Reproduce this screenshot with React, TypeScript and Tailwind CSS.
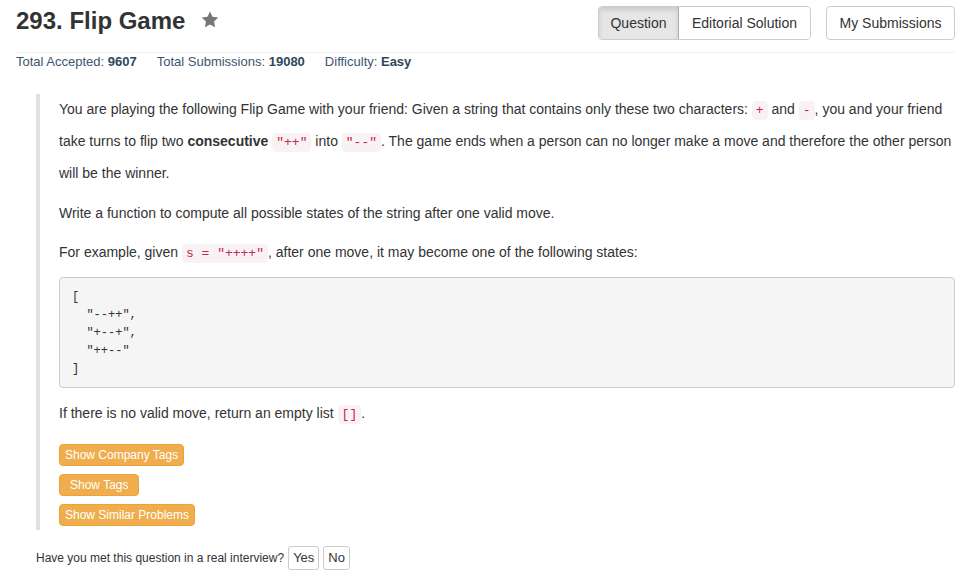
import React from 'react';

const code = "font-['Liberation_Mono',monospace] text-[13px] px-[4px] py-[2px] rounded-[4px] bg-[#f9f2f4] text-[#c7254e]";

function Star() {
  return (
    <svg width="18" height="17" viewBox="0 0 24 23" className="ml-[16px] mt-[5px]">
      <path d="M12 0.8l3.4 7.1 7.8 1-5.7 5.4 1.4 7.7L12 18.3l-6.9 3.7 1.4-7.7L0.8 8.9l7.8-1z" fill="#777" />
    </svg>
  );
}

export default function App() {
  const orange =
    'h-[22px] leading-[20px] text-[12px] text-white bg-[#f0ad4e] border border-[#eea236] rounded-[4px] self-start';

  return (
    <div className="w-[973px] h-[574px] bg-white text-[#333] font-['Liberation_Sans',Arial,sans-serif] overflow-hidden">
      {/* header */}
      <div className="ml-[16px] mr-[18px] pt-[6px] pb-[12px] border-b border-[#eee] flex justify-between items-start">
        <div className="flex items-start">
          <h1 className="text-[24px] leading-[30px] font-bold text-[#333]">293. Flip Game</h1>
          <Star />
        </div>
        <div className="flex gap-[15px] text-[14px]">
          <div className="flex rounded-[4px] border border-[#ccc] h-[34px] overflow-hidden">
            <div className="w-[80px] flex items-center justify-center bg-[#e6e6e6] shadow-[inset_0_3px_5px_rgba(0,0,0,0.125)] border-r border-[#adadad]">
              Question
            </div>
            <div className="w-[131px] flex items-center justify-center bg-white">Editorial Solution</div>
          </div>
          <div className="w-[129px] h-[34px] flex items-center justify-center rounded-[4px] border border-[#ccc] bg-white">
            My Submissions
          </div>
        </div>
      </div>

      {/* stats */}
      <div className="ml-[16px] flex gap-[20px] text-[13px] leading-[18px] text-[#3b5672]">
        <span>
          Total Accepted: <b className="text-[#2f4660]">9607</b>
        </span>
        <span>
          Total Submissions: <b className="text-[#2f4660]">19080</b>
        </span>
        <span>
          Difficulty: <b className="text-[#2f4660]">Easy</b>
        </span>
      </div>

      {/* question body */}
      <div className="mt-[23px] ml-[36px] mr-[18px] border-l-[4px] border-[#e0e0e0] pl-[19px] pb-[4px] flex flex-col text-[14px] leading-[31px]">
        <p className="mb-[9px]">
          You are playing the following Flip Game with your friend: Given a string that contains only these two characters: <code className={code}>+</code> and <code className={code}>-</code>, you and your friend take turns to flip two <b>consecutive</b> <code className={code}>"++"</code> into <code className={code}>"--"</code>. The game ends when a person can no longer make a move and therefore the other person will be the winner.
        </p>
        <p className="mb-[8px]">Write a function to compute all possible states of the string after one valid move.</p>
        <p className="mb-[8px]">
          For example, given <code className={code}>s = "++++"</code>, after one move, it may become one of the following states:
        </p>
        <pre className="mb-[10px] pt-[10px] pb-[9px] px-[12px] bg-[#f5f5f5] border border-[#ccc] rounded-[4px] font-['Liberation_Mono',monospace] text-[12px] leading-[18px] text-[#333]">
{`[
  "--++",
  "+--+",
  "++--"
]`}
        </pre>
        <p className="mb-[14px]">
          If there is no valid move, return an empty list <code className={code}>[]</code>.
        </p>
        <div className="flex flex-col gap-[8px]">
          <button className={`${orange} px-[5px]`}>Show Company Tags</button>
          <button className={`${orange} px-[10px]`}>Show Tags</button>
          <button className={`${orange} px-[5px]`}>Show Similar Problems</button>
        </div>
      </div>

      {/* interview row */}
      <div className="mt-[16px] ml-[36px] flex items-center gap-[4px] text-[12px]">
        <span>Have you met this question in a real interview?</span>
        <button className="h-[24px] px-[4px] text-[13px] border border-[#ccc] rounded-[3px] bg-white">Yes</button>
        <button className="h-[24px] px-[4px] text-[13px] border border-[#ccc] rounded-[3px] bg-white">No</button>
      </div>
    </div>
  );
}
